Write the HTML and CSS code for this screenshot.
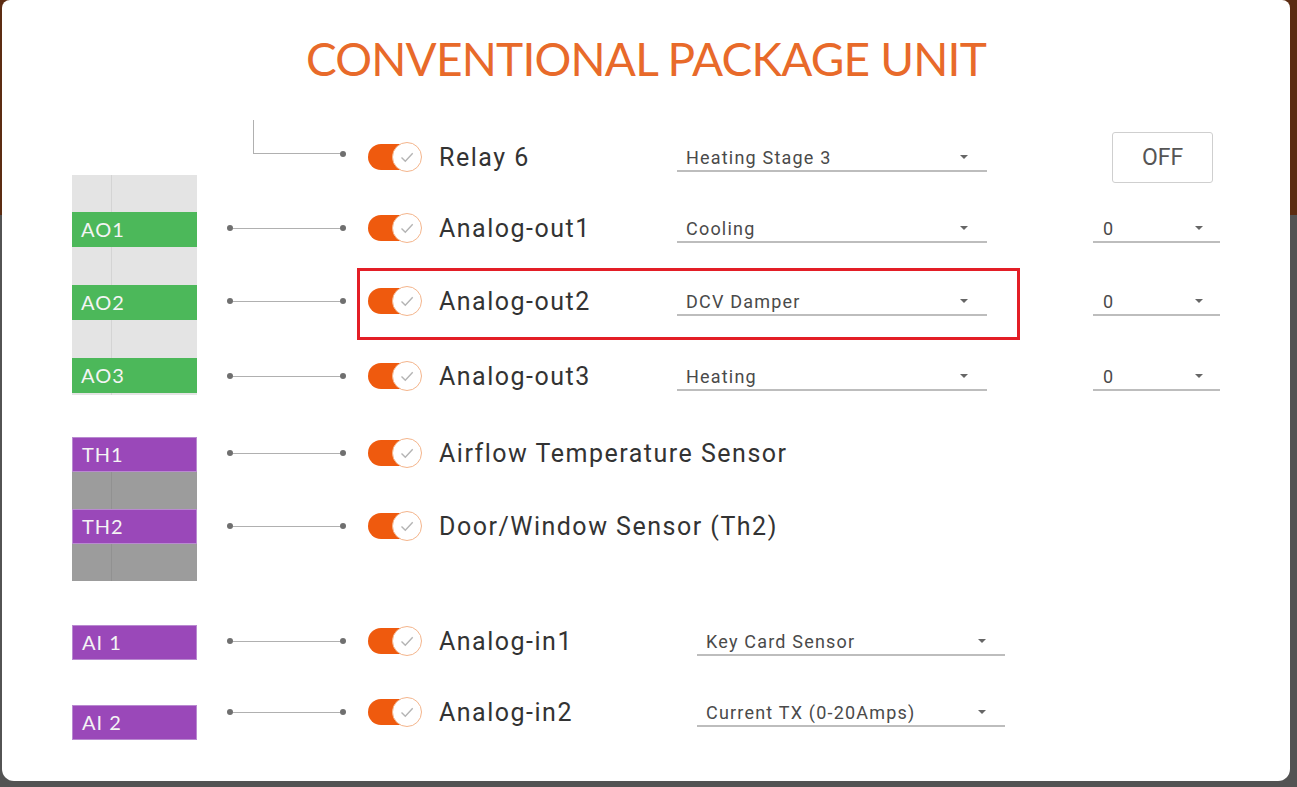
FILE: index.html
```html
<!DOCTYPE html>
<html lang="en">
<head>
    <meta charset="UTF-8">
    <title>Conventional Package Unit</title>
    <link rel="stylesheet" href="styles.css">
</head>
<body>

    <div class="dialog">
        <h1 class="title">CONVENTIONAL PACKAGE UNIT</h1>

        <div class="board">
            <!-- terminal strip on the left -->
            <div class="terminals">
                <div class="terminal terminal-ao">
                    <span class="pin pin-green">AO1</span>
                    <span class="pin pin-green">AO2</span>
                    <span class="pin pin-green">AO3</span>
                </div>
                <div class="terminal terminal-th">
                    <span class="pin pin-purple">TH1</span>
                    <span class="pin pin-purple">TH2</span>
                </div>
                <span class="pin pin-purple pin-ai1">AI 1</span>
                <span class="pin pin-purple pin-ai2">AI 2</span>
            </div>

            <div class="rows">
                <div class="row">
                    <div class="wire wire-elbow"><span class="elbow"></span><span class="dot"></span></div>
                    <div class="toggle"><span class="knob"><svg viewBox="0 0 28 28" width="28" height="28"><path d="M8.5 14.5l3.8 3.8 7.4-8" fill="none" stroke="#b4b4b4" stroke-width="1.4"/></svg></span></div>
                    <div class="name">Relay 6</div>
                    <div class="select"><span>Heating Stage 3</span><i class="caret"></i></div>
                    <button class="btn-off">OFF</button>
                </div>

                <div class="row">
                    <div class="wire"><span class="dot"></span><span class="line"></span><span class="dot"></span></div>
                    <div class="toggle"><span class="knob"><svg viewBox="0 0 28 28" width="28" height="28"><path d="M8.5 14.5l3.8 3.8 7.4-8" fill="none" stroke="#b4b4b4" stroke-width="1.4"/></svg></span></div>
                    <div class="name">Analog-out1</div>
                    <div class="select"><span>Cooling</span><i class="caret"></i></div>
                    <div class="select select-value"><span>0</span><i class="caret"></i></div>
                </div>

                <div class="row">
                    <div class="wire"><span class="dot"></span><span class="line"></span><span class="dot"></span></div>
                    <div class="toggle"><span class="knob"><svg viewBox="0 0 28 28" width="28" height="28"><path d="M8.5 14.5l3.8 3.8 7.4-8" fill="none" stroke="#b4b4b4" stroke-width="1.4"/></svg></span></div>
                    <div class="name">Analog-out2</div>
                    <div class="select"><span>DCV Damper</span><i class="caret"></i></div>
                    <div class="select select-value"><span>0</span><i class="caret"></i></div>
                    <div class="highlight"></div>
                </div>

                <div class="row">
                    <div class="wire"><span class="dot"></span><span class="line"></span><span class="dot"></span></div>
                    <div class="toggle"><span class="knob"><svg viewBox="0 0 28 28" width="28" height="28"><path d="M8.5 14.5l3.8 3.8 7.4-8" fill="none" stroke="#b4b4b4" stroke-width="1.4"/></svg></span></div>
                    <div class="name">Analog-out3</div>
                    <div class="select"><span>Heating</span><i class="caret"></i></div>
                    <div class="select select-value"><span>0</span><i class="caret"></i></div>
                </div>

                <div class="row">
                    <div class="wire"><span class="dot"></span><span class="line"></span><span class="dot"></span></div>
                    <div class="toggle"><span class="knob"><svg viewBox="0 0 28 28" width="28" height="28"><path d="M8.5 14.5l3.8 3.8 7.4-8" fill="none" stroke="#b4b4b4" stroke-width="1.4"/></svg></span></div>
                    <div class="name name-wide">Airflow Temperature Sensor</div>
                </div>

                <div class="row">
                    <div class="wire"><span class="dot"></span><span class="line"></span><span class="dot"></span></div>
                    <div class="toggle"><span class="knob"><svg viewBox="0 0 28 28" width="28" height="28"><path d="M8.5 14.5l3.8 3.8 7.4-8" fill="none" stroke="#b4b4b4" stroke-width="1.4"/></svg></span></div>
                    <div class="name name-wide">Door/Window Sensor (Th2)</div>
                </div>

                <div class="row-spacer"></div>

                <div class="row">
                    <div class="wire"><span class="dot"></span><span class="line"></span><span class="dot"></span></div>
                    <div class="toggle"><span class="knob"><svg viewBox="0 0 28 28" width="28" height="28"><path d="M8.5 14.5l3.8 3.8 7.4-8" fill="none" stroke="#b4b4b4" stroke-width="1.4"/></svg></span></div>
                    <div class="name">Analog-in1</div>
                    <div class="select select-ai"><span>Key Card Sensor</span><i class="caret"></i></div>
                </div>

                <div class="row">
                    <div class="wire"><span class="dot"></span><span class="line"></span><span class="dot"></span></div>
                    <div class="toggle"><span class="knob"><svg viewBox="0 0 28 28" width="28" height="28"><path d="M8.5 14.5l3.8 3.8 7.4-8" fill="none" stroke="#b4b4b4" stroke-width="1.4"/></svg></span></div>
                    <div class="name">Analog-in2</div>
                    <div class="select select-ai"><span>Current TX (0-20Amps)</span><i class="caret"></i></div>
                </div>
            </div>
        </div>
    </div>

</body>
</html>
```

FILE: styles.css
```css
* {
    box-sizing: border-box;
}

body {
    margin: 0;
    height: 787px;
    overflow: hidden;
    background: linear-gradient(to bottom, #5c2c12 0, #5c2c12 215px, #535353 215px);
    font-family: Roboto, 'Liberation Sans', sans-serif;
}

.dialog {
    width: 1288px;
    height: 781px;
    margin-left: 2px;
    padding: 30px 0 0 70px;
    background-color: #fff;
    border-radius: 8px 8px 12px 12px;
}

.title {
    margin: 0 0 32px -70px;
    font: 400 46px/58px Lato, sans-serif;
    letter-spacing: -0.8px;
    color: #e86a2a;
    text-align: center;
}

.board {
    display: flex;
}

/* left terminal strip */
.terminals {
    width: 125px;
    display: flex;
    flex-direction: column;
    padding-top: 55px;
}

.terminal {
    display: flex;
    flex-direction: column;
    background-image: linear-gradient(to right, transparent 39px, rgba(0, 0, 0, 0.07) 39px, rgba(0, 0, 0, 0.07) 40px, transparent 40px);
}

.terminal-ao {
    height: 220px;
    padding-top: 37px;
    gap: 38px;
    background-color: #e4e4e4;
}

.terminal-th {
    height: 144px;
    margin-top: 42px;
    gap: 37px;
    background-color: #9c9c9c;
}

.pin {
    display: block;
    height: 35px;
    padding-left: 9px;
    font: 400 20px/35px Lato, sans-serif;
    letter-spacing: 1px;
    color: #f4f4f4;
}

.pin-green {
    background-color: #4cb85a;
}

.pin-purple {
    background-color: #9a48b9;
    border: 1px solid #b98ad0;
    line-height: 33px;
}

.pin-ai1 {
    margin-top: 44px;
}

.pin-ai2 {
    margin-top: 45px;
}

/* rows */
.rows {
    display: grid;
    grid-template-rows: 74px 68px 78px 72px 82px 64px 48px 70px 72px;
}

.row {
    position: relative;
    display: grid;
    grid-template-columns: 171px 71px 238px 416px 127px;
    align-items: center;
}

.wire {
    display: flex;
    align-items: center;
    padding-left: 30px;
}

.dot {
    width: 6px;
    height: 6px;
    border-radius: 50%;
    background-color: #6f6f6f;
}

.line {
    width: 107px;
    height: 1px;
    background-color: #b0b0b0;
}

.wire-elbow {
    align-self: start;
    align-items: flex-end;
    padding-left: 56px;
}

.elbow {
    width: 87px;
    height: 34px;
    border-left: 1px solid #b0b0b0;
    border-bottom: 1px solid #b0b0b0;
}

.wire-elbow .dot {
    margin-bottom: -3px;
}

.toggle {
    position: relative;
    width: 54px;
    height: 30px;
}

.toggle::before {
    content: "";
    position: absolute;
    left: 0;
    top: 2px;
    width: 48px;
    height: 26px;
    border-radius: 13px;
    background-color: #ef5a0e;
}

.knob {
    position: absolute;
    right: 0;
    top: 0;
    width: 30px;
    height: 30px;
    border-radius: 50%;
    background-color: #fff;
    border: 1px solid #f4b58c;
    display: flex;
    align-items: center;
    justify-content: center;
}

.name {
    font-size: 25px;
    letter-spacing: 1.5px;
    color: #333;
    white-space: nowrap;
}

.name-wide {
    grid-column: 3 / 6;
}

.select {
    width: 310px;
    height: 29px;
    display: flex;
    align-items: center;
    justify-content: space-between;
    padding: 2px 19px 0 9px;
    border-bottom: 2px solid #bdbdbd;
    font-size: 18px;
    letter-spacing: 1.2px;
    color: #4a4a4a;
}

.select-ai {
    width: 308px;
    margin-left: 20px;
}

.select-value {
    width: 127px;
    padding-left: 10px;
    padding-right: 17px;
}

.caret {
    width: 0;
    height: 0;
    border-left: 4px solid transparent;
    border-right: 4px solid transparent;
    border-top: 4px solid #666;
}

.btn-off {
    justify-self: start;
    width: 101px;
    height: 51px;
    margin-left: 19px;
    background-color: #fff;
    border: 1px solid #cfcfcf;
    border-radius: 3px;
    font-family: Roboto, sans-serif;
    font-size: 23px;
    color: #555;
}

/* red annotation box over Analog-out2 */
.highlight {
    position: absolute;
    left: 160px;
    top: 6px;
    width: 663px;
    height: 72px;
    border: 3px solid #e31e26;
    pointer-events: none;
}
```
